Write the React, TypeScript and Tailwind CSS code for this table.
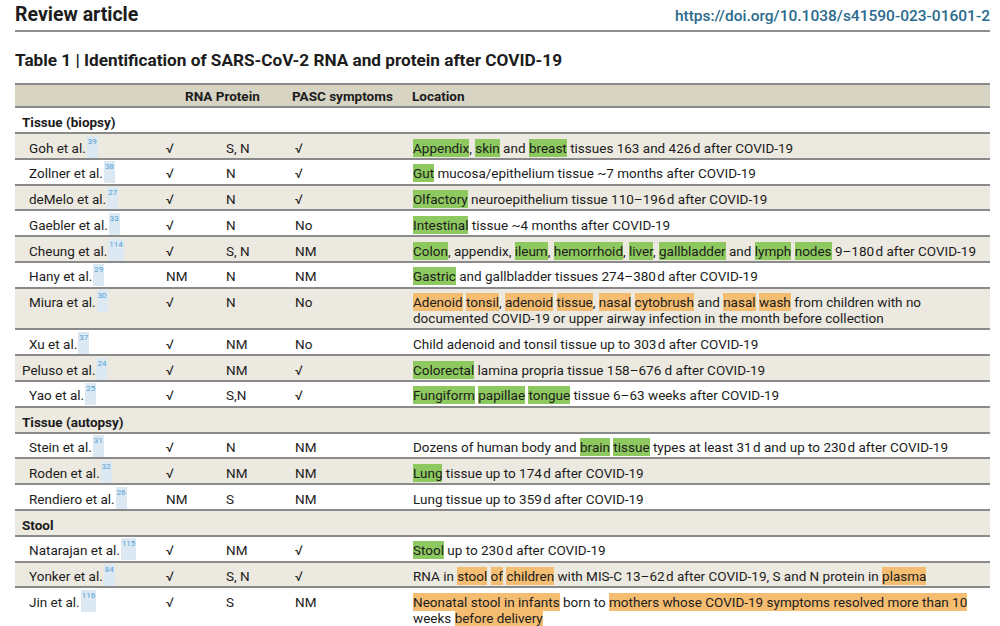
import React from "react"

type Row = {
  name?: string
  ref?: string
  rna?: string
  protein?: string
  pasc?: string
  loc?: string
  section?: string
  tight?: boolean
}

// <...> = green highlight, {...} = orange highlight, | = line break
const rows: Row[] = [
  { section: "Tissue (biopsy)" },
  { name: "Goh et al.", ref: "39", rna: "√", protein: "S, N", pasc: "√", loc: "<Appendix>, <skin> and <breast> tissues 163 and 426\u200Ad after COVID-19" },
  { name: "Zollner et al.", ref: "38", rna: "√", protein: "N", pasc: "√", loc: "<Gut> mucosa/epithelium tissue ~7 months after COVID-19" },
  { name: "deMelo et al.", ref: "27", rna: "√", protein: "N", pasc: "√", loc: "<Olfactory> neuroepithelium tissue 110–196\u200Ad after COVID-19" },
  { name: "Gaebler et al.", ref: "33", rna: "√", protein: "N", pasc: "No", loc: "<Intestinal> tissue ~4 months after COVID-19" },
  { name: "Cheung et al.", ref: "114", rna: "√", protein: "S, N", pasc: "NM", loc: "<Colon>, appendix, <ileum>, <hemorrhoid>, <liver>, <gallbladder> and <lymph> <nodes> 9–180\u200Ad after COVID-19" },
  { name: "Hany et al.", ref: "29", rna: "NM", protein: "N", pasc: "NM", loc: "<Gastric> and gallbladder tissues 274–380\u200Ad after COVID-19" },
  { name: "Miura et al.", ref: "30", rna: "√", protein: "N", pasc: "No", loc: "{Adenoid} {tonsil}, {adenoid} {tissue}, {nasal} {cytobrush} and {nasal} {wash} from children with no|documented COVID-19 or upper airway infection in the month before collection" },
  { name: "Xu et al.", ref: "37", rna: "√", protein: "NM", pasc: "No", loc: "Child adenoid and tonsil tissue up to 303\u200Ad after COVID-19" },
  { name: "Peluso et al.", ref: "24", rna: "√", protein: "NM", pasc: "√", loc: "<Colorectal> lamina propria tissue 158–676 d after COVID-19", tight: true },
  { name: "Yao et al.", ref: "25", rna: "√", protein: "S,N", pasc: "√", loc: "<Fungiform> <papillae> <tongue> tissue 6–63 weeks after COVID-19" },
  { section: "Tissue (autopsy)" },
  { name: "Stein et al.", ref: "31", rna: "√", protein: "N", pasc: "NM", loc: "Dozens of human body and <brain> <tissue> types at least 31\u200Ad and up to 230\u200Ad after COVID-19" },
  { name: "Roden et al.", ref: "32", rna: "√", protein: "NM", pasc: "NM", loc: "<Lung> tissue up to 174\u200Ad after COVID-19" },
  { name: "Rendiero et al.", ref: "26", rna: "NM", protein: "S", pasc: "NM", loc: "Lung tissue up to 359\u200Ad after COVID-19" },
  { section: "Stool" },
  { name: "Natarajan et al.", ref: "115", rna: "√", protein: "NM", pasc: "√", loc: "<Stool> up to 230\u200Ad after COVID-19" },
  { name: "Yonker et al.", ref: "84", rna: "√", protein: "S, N", pasc: "√", loc: "RNA in {stool} {of} {children} with MIS-C 13–62\u200Ad after COVID-19, S and N protein in {plasma}" },
  { name: "Jin et al.", ref: "116", rna: "√", protein: "S", pasc: "NM", loc: "{Neonatal stool in infants} born to {mothers whose COVID-19 symptoms resolved more than 10}|weeks {before delivery}" },
]

function Location({ text }: { text: string }) {
  const lines = text.split("|")
  return (
    <>
      {lines.map((line, li) => (
        <div key={li} className="whitespace-nowrap">
          {line.split(/(<[^>]+>|\{[^}]+\})/).map((part, i) => {
            if (part.startsWith("<")) {
              return (
                <span key={i} className="bg-[#8ec95f] py-[1px]">
                  {part.slice(1, -1)}
                </span>
              )
            }
            if (part.startsWith("{")) {
              return (
                <span key={i} className="bg-[#f5bd71] py-[1px]">
                  {part.slice(1, -1)}
                </span>
              )
            }
            return <span key={i}>{part}</span>
          })}
        </div>
      ))}
    </>
  )
}

export default function App() {
  return (
    <div className="w-[1000px] h-[626px] overflow-hidden bg-white text-[#1c1c1c] font-['Roboto',sans-serif] pl-[15px] pr-[10px]">
      {/* top bar */}
      <div className="flex items-end justify-between h-[32px] pb-[6px] border-b-[2px] border-[#8d8d8d]">
        <div className="text-[19.5px] font-bold leading-none">Review article</div>
        <div className="text-[15.5px] font-medium leading-none text-[#2b6a8d]">https://doi.org/10.1038/s41590-023-01601-2</div>
      </div>

      <div className="mt-[18px] text-[17.2px] font-bold leading-[20px]">
        Table 1 | Identification of SARS-CoV-2 RNA and protein after COVID-19
      </div>

      <div className="mt-[13px] text-[13.5px] leading-[16px]">
        {/* header band */}
        <div className="grid grid-cols-[170px_107px_120px_1fr] h-[25px] items-center bg-[#d7d4c3] border-y-[2px] border-[#8a8a8a] font-bold">
          <div />
          <div>RNA Protein</div>
          <div>PASC symptoms</div>
          <div>Location</div>
        </div>

        {rows.map((r, idx) => {
          const shade = idx % 2 === 1 ? "bg-[#ece9e1]" : "bg-white"
          if (r.section) {
            return (
              <div
                key={idx}
                className={`${shade} border-b-[2px] border-[#8a8a8a] h-[26px] pl-[7px] pt-[6px] font-bold`}
              >
                {r.section}
              </div>
            )
          }
          return (
            <div
              key={idx}
              className={`${shade} grid grid-cols-[151px_60px_69px_118px_1fr] border-b-[2px] border-[#8a8a8a] pt-[5.5px] pb-[2.25px]`}
            >
              <div className={r.tight ? "pl-[7px]" : "pl-[14px]"}>
                {r.name}
                <span className="inline-block align-top -mt-[4px] -mb-[6px] h-[22px] bg-[#dce9f3] text-[#4fa0d6] text-[8px] leading-[11px] px-[1px] ml-[1px]">
                  {r.ref}
                </span>
              </div>
              <div>{r.rna}</div>
              <div>{r.protein}</div>
              <div>{r.pasc}</div>
              <div>{r.loc && <Location text={r.loc} />}</div>
            </div>
          )
        })}
      </div>
    </div>
  )
}
